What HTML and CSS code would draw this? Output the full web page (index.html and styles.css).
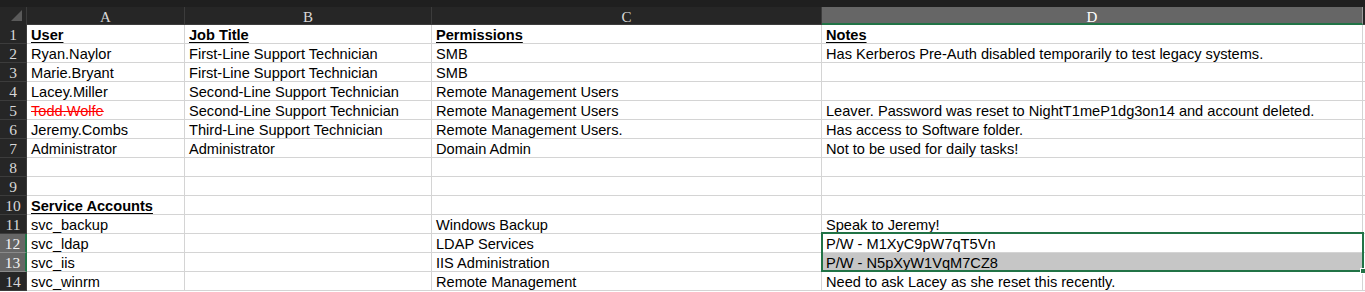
FILE: index.html
```html
<!DOCTYPE html>
<html>
<head>
<meta charset="utf-8">
<link rel="stylesheet" href="styles.css">
</head>
<body>
<div class="topstrip"></div>
<div class="sheet">
  <div class="corner"><span class="tri"></span></div>
  <div class="colhead">A</div>
  <div class="colhead">B</div>
  <div class="colhead">C</div>
  <div class="colhead sel">D</div>
  <div class="colhead tail"></div>

  <div class="rowhead">1</div><div class="cell hd">User</div><div class="cell hd">Job Title</div><div class="cell hd">Permissions</div><div class="cell hd">Notes</div><div class="cell tail"></div>
  <div class="rowhead">2</div><div class="cell">Ryan.Naylor</div><div class="cell">First-Line Support Technician</div><div class="cell">SMB</div><div class="cell">Has Kerberos Pre-Auth disabled temporarily to test legacy systems.</div><div class="cell tail"></div>
  <div class="rowhead">3</div><div class="cell">Marie.Bryant</div><div class="cell">First-Line Support Technician</div><div class="cell">SMB</div><div class="cell"></div><div class="cell tail"></div>
  <div class="rowhead">4</div><div class="cell">Lacey.Miller</div><div class="cell">Second-Line Support Technician</div><div class="cell">Remote Management Users</div><div class="cell"></div><div class="cell tail"></div>
  <div class="rowhead">5</div><div class="cell struck">Todd.Wolfe</div><div class="cell">Second-Line Support Technician</div><div class="cell">Remote Management Users</div><div class="cell">Leaver. Password was reset to NightT1meP1dg3on14 and account deleted.</div><div class="cell tail"></div>
  <div class="rowhead">6</div><div class="cell">Jeremy.Combs</div><div class="cell">Third-Line Support Technician</div><div class="cell">Remote Management Users.</div><div class="cell">Has access to Software folder.</div><div class="cell tail"></div>
  <div class="rowhead">7</div><div class="cell">Administrator</div><div class="cell">Administrator</div><div class="cell">Domain Admin</div><div class="cell">Not to be used for daily tasks!</div><div class="cell tail"></div>
  <div class="rowhead">8</div><div class="cell"></div><div class="cell"></div><div class="cell"></div><div class="cell"></div><div class="cell tail"></div>
  <div class="rowhead">9</div><div class="cell"></div><div class="cell"></div><div class="cell"></div><div class="cell"></div><div class="cell tail"></div>
  <div class="rowhead">10</div><div class="cell hd">Service Accounts</div><div class="cell"></div><div class="cell"></div><div class="cell"></div><div class="cell tail"></div>
  <div class="rowhead">11</div><div class="cell">svc_backup</div><div class="cell"></div><div class="cell">Windows Backup</div><div class="cell">Speak to Jeremy!</div><div class="cell tail"></div>
  <div class="rowhead sel">12</div><div class="cell">svc_ldap</div><div class="cell"></div><div class="cell">LDAP Services</div><div class="cell">P/W - M1XyC9pW7qT5Vn</div><div class="cell tail"></div>
  <div class="rowhead sel">13</div><div class="cell">svc_iis</div><div class="cell"></div><div class="cell">IIS Administration</div><div class="cell shaded">P/W - N5pXyW1VqM7CZ8</div><div class="cell tail"></div>
  <div class="rowhead">14</div><div class="cell">svc_winrm</div><div class="cell"></div><div class="cell">Remote Management</div><div class="cell">Need to ask Lacey as she reset this recently.</div><div class="cell tail"></div>

  <div class="selection"><span class="handle"></span></div>
</div>
</body>
</html>
```

FILE: styles.css
```css
* { box-sizing: border-box; }
html, body {
  margin: 0;
  padding: 0;
  background: #ffffff;
  overflow: hidden;
}
.topstrip {
  height: 7px;
  background: #1f1f1f;
}
.sheet {
  position: relative;
  display: grid;
  grid-template-columns: 27px 158px 247px 390px 541px 2px;
  grid-auto-rows: 19px;
  grid-template-rows: 18px;
  font-family: "Liberation Sans", Arial, sans-serif;
  font-size: 14.6px;
  color: #000;
}
.corner {
  background: #262626;
  border-right: 1px solid #3c3c3c;
  position: relative;
}
.corner .tri {
  position: absolute;
  right: 4px;
  bottom: 4px;
  width: 0;
  height: 0;
  border-left: 11px solid transparent;
  border-bottom: 11px solid #5a5a5a;
}
.colhead {
  background: #262626;
  color: #d8d8d8;
  font-family: "Liberation Serif", "DejaVu Serif", serif;
  font-size: 15px;
  line-height: 20px;
  text-align: center;
  border-right: 1px solid #3c3c3c;
  border-bottom: 1px solid #3c3c3c;
}
.colhead.sel {
  background: #666666;
  color: #ffffff;
  border-bottom: 2px solid #217346;
  border-right: 1px solid #9a9a9a;
}
.colhead.tail {
  border-right: none;
  background: #262626;
}
.rowhead {
  background: #262626;
  color: #d8d8d8;
  font-family: "Liberation Serif", "DejaVu Serif", serif;
  font-size: 15.5px;
  line-height: 20px;
  text-align: center;
  border-right: 1px solid #3c3c3c;
  border-bottom: 1px solid #3c3c3c;
}
.rowhead.sel {
  background: #666666;
  color: #f2f2f2;
  border-right: 2px solid #217346;
  border-bottom: 1px solid #8a8a8a;
}
.cell {
  border-right: 1px solid #d4d4d4;
  border-bottom: 1px solid #d4d4d4;
  padding: 2px 0 0 4px;
  line-height: 17px;
  white-space: nowrap;
}
.cell.tail {
  border-right: none;
  background: #ffffff;
}
.hd {
  font-weight: bold;
  text-decoration: underline;
  text-underline-offset: 2px;
}
.struck {
  color: #ff0000;
  text-decoration: line-through;
}
.shaded {
  background: #c6c6c6;
}
.selection {
  position: absolute;
  left: 821px;
  top: 225px;
  width: 543px;
  height: 40px;
  border: 2px solid #217346;
  pointer-events: none;
}
.selection .handle {
  position: absolute;
  right: -4px;
  bottom: -4px;
  width: 6px;
  height: 6px;
  background: #217346;
  border: 1px solid #ffffff;
}
```
